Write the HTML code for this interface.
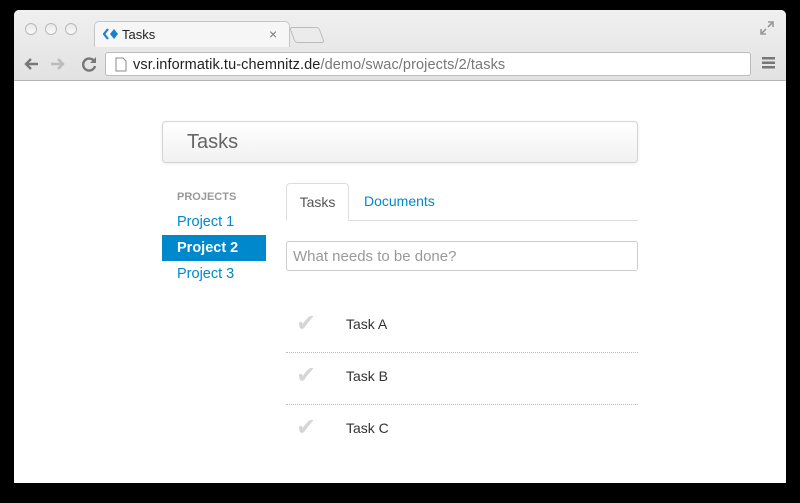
<!DOCTYPE html>
<html><head><meta charset="utf-8"><style>
*{box-sizing:border-box;margin:0;padding:0}
body{width:800px;height:503px;background:#000;font-family:"Liberation Sans",Arial,sans-serif;position:relative;overflow:hidden}
.win{position:absolute;left:14px;top:10px;width:772px;height:473px;background:#fff;border-radius:5px 5px 0 0;overflow:hidden}
.top{position:absolute;left:0;top:0;width:772px;height:71px;background:linear-gradient(#f0f0f0,#e2e2e2);border-bottom:1px solid #b5b5b5}
.dot{position:absolute;top:13px;width:12px;height:12px;border-radius:50%;border:1px solid #b9b9b9;background:linear-gradient(#e8e8e8,#fafafa)}
.tab{position:absolute;left:80px;top:11px;width:196px;height:26px;background:#f6f6f6;border:1px solid #c5c5c5;border-bottom:none;border-radius:5px 5px 0 0}
.tab span{position:absolute;left:27px;top:5px;font-size:13px;color:#222}
.tab .x{left:174px;top:4px;color:#777;font-size:14px}
.ntab{position:absolute;left:278px;top:17px;width:30px;height:16px;border:1px solid #bbb;border-radius:3px;background:#ebebeb;transform:skewX(20deg)}
.url{position:absolute;left:91px;top:42px;width:646px;height:24px;background:#fff;border:1px solid #bcbcbc;border-radius:3px}
.url span{position:absolute;left:27px;top:4px;font-size:14.5px;color:#222;letter-spacing:0.1px}
.url span i{font-style:normal;color:#777}
.hdr{position:absolute;left:148px;top:111px;width:476px;height:42px;border:1px solid #d4d4d4;border-radius:4px;background:linear-gradient(#fff,#f1f1f1);box-shadow:0 1px 3px rgba(0,0,0,.08)}
.hdr span{position:absolute;left:24px;top:9px;font-size:20px;color:#666}
.side{position:absolute;left:148px;top:181px;width:104px}
.side .h{font-size:11px;font-weight:bold;color:#999;padding-left:15px;height:18px}
.side a{display:block;height:26px;line-height:26px;padding-left:15px;color:#0088cc;font-size:14.5px;text-decoration:none}
.side a.a{background:#0088cc;color:#fff;font-weight:bold}
.tabs{position:absolute;left:272px;top:173px;width:352px;height:38px;border-bottom:1px solid #ddd}
.t1{position:absolute;left:0;top:0;width:63px;height:38px;border:1px solid #ddd;border-bottom:1px solid #fff;border-radius:4px 4px 0 0;background:#fff;font-size:14px;color:#555;text-align:center;line-height:36px}
.t2{position:absolute;left:78px;top:0;line-height:37px;font-size:14px;color:#0088cc}
.inp{position:absolute;left:272px;top:231px;width:352px;height:30px;border:1px solid #ccc;border-radius:3px}
.inp span{position:absolute;left:6px;top:6px;font-size:15px;color:#999}
.row{position:absolute;left:272px;width:352px;height:52px}
.row.b{border-bottom:1px dotted #bbb}
.row .c{position:absolute;left:10px;top:8px;font-size:24px;color:#d6d6d6}
.row .t{position:absolute;left:60px;top:15px;font-size:14px;color:#333}
</style></head><body>
<div class="win">
<div class="top">
<div class="dot" style="left:11px"></div><div class="dot" style="left:31px"></div><div class="dot" style="left:51px"></div>
<div class="tab"><svg style="position:absolute;left:8px;top:6px" width="16" height="12" viewBox="0 0 16 12"><path d="M5 1L1 6l4 5" stroke="#1a7fd0" stroke-width="2.2" fill="none"/><path d="M7 6l4-5 4 5-4 5z" fill="#1a7fd0"/></svg><span>Tasks</span><span class="x">×</span></div>
<div class="ntab"></div>
<svg style="position:absolute;left:746px;top:11px" width="14" height="14" viewBox="0 0 14 14"><path d="M8 1h5v5M13 1L8 6M6 13H1V8M1 13l5-5" stroke="#999" stroke-width="1.6" fill="none"/></svg>
<svg style="position:absolute;left:9px;top:46px" width="80" height="16" viewBox="0 0 80 16"><path d="M15 8H3M8 3L3 8l5 5" stroke="#777" stroke-width="2.4" fill="none"/><path d="M28 8h12M35 3l5 5-5 5" stroke="#bbb" stroke-width="2.4" fill="none"/><path d="M71 5a6 6 0 1 0 1 5" stroke="#777" stroke-width="2.4" fill="none"/><path d="M73 1v6h-6z" fill="#777"/></svg>
<div class="url"><svg style="position:absolute;left:9px;top:4px" width="12" height="15" viewBox="0 0 12 15"><path d="M1 1h7l3 3v10H1z" stroke="#888" fill="#fff"/></svg><span>vsr.informatik.tu-chemnitz.de<i>/demo/swac/projects/2/tasks</i></span></div>
<svg style="position:absolute;left:748px;top:47px" width="14" height="12"><rect y="0" width="13" height="2.5" fill="#777"/><rect y="4.5" width="13" height="2.5" fill="#777"/><rect y="9" width="13" height="2.5" fill="#777"/></svg>
</div>
<div class="hdr"><span>Tasks</span></div>
<div class="side"><div class="h">PROJECTS</div><a>Project 1</a><a class="a">Project 2</a><a>Project 3</a></div>
<div class="tabs"><div class="t1">Tasks</div><div class="t2">Documents</div></div>
<div class="inp"><span>What needs to be done?</span></div>
<div class="row b" style="top:291px"><span class="c">✔</span><span class="t">Task A</span></div>
<div class="row b" style="top:343px"><span class="c">✔</span><span class="t">Task B</span></div>
<div class="row" style="top:395px"><span class="c">✔</span><span class="t">Task C</span></div>
</div>
</body></html>
